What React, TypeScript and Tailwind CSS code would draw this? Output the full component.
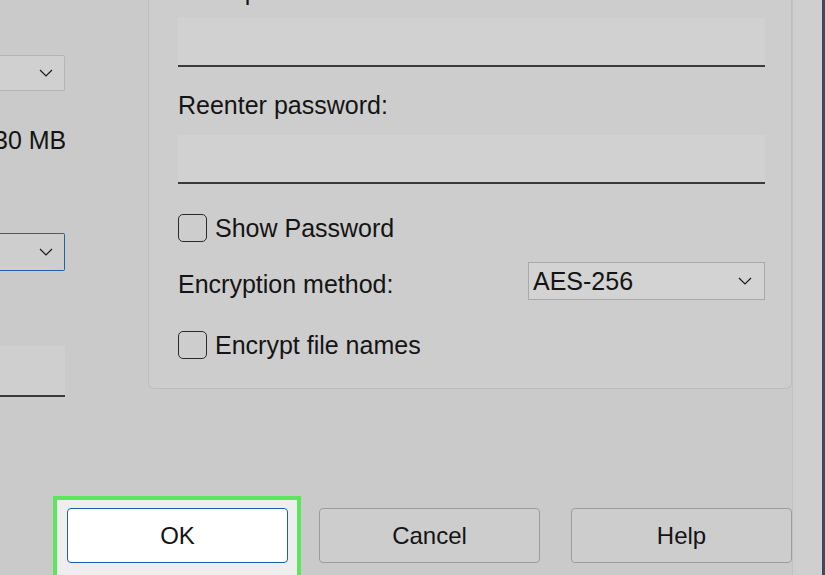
import React from "react";

function Chevron() {
  return (
    <svg width="14" height="8" viewBox="0 0 14 8" className="shrink-0">
      <polyline points="1,1 7,7 13,1" fill="none" stroke="#1a1a1a" strokeWidth="1.2" />
    </svg>
  );
}

function Checkbox({ label }: { label: string }) {
  return (
    <div className="flex h-[28px] items-center">
      <div className="h-[28px] w-[29px] rounded-[5px] border-[1.5px] border-[#2a2a2a]" />
      <span className="ml-[8px] whitespace-nowrap leading-[28px]">{label}</span>
    </div>
  );
}

function DialogButton({ label, primary }: { label: string; primary?: boolean }) {
  return (
    <button
      type="button"
      className={`flex h-[55px] w-[221px] shrink-0 items-center justify-center rounded-[4px] border text-[24px] ${
        primary ? "border-[#1d5fae] bg-white" : "border-[#9c9c9c] bg-[#cdcdcd]"
      }`}
    >
      {label}
    </button>
  );
}

export default function App() {
  return (
    <div className="relative flex h-[575px] w-[825px] overflow-hidden bg-[#cacaca] font-['Liberation_Sans',Arial,sans-serif] text-[25px] text-[#141414]">
      <div className="flex w-[792px] shrink-0 flex-col">
        {/* Top area */}
        <div className="flex h-[496px] shrink-0">
          {/* Left column, cut off by the frame */}
          <div className="flex w-[65px] shrink-0 flex-col overflow-hidden">
            <div className="mt-[55px] flex h-[36px] items-center justify-end rounded-r-[2px] border border-l-0 border-[#b5b5b5] bg-[#d0d0d0] pr-[11px]">
              <Chevron />
            </div>
            <div className="-ml-[6px] mt-[35px] h-[28px] whitespace-nowrap leading-[28px]">30 MB</div>
            <div className="mt-[79px] flex h-[38px] items-center justify-end rounded-r-[2px] border border-l-0 border-[#2a5ea8] bg-[#cecece] pr-[11px]">
              <Chevron />
            </div>
            <div className="mt-[75px] h-[51px] border-b-2 border-[#3a3a3a] bg-[#cfcfcf]" />
          </div>

          {/* Encryption group */}
          <div className="ml-[83px] flex h-[389px] w-[644px] shrink-0 flex-col rounded-b-[6px] border border-t-0 border-[#bdbdbd] bg-[#cdcdcd] pl-[29px]">
            <div className="-mt-[23px] h-[28px] whitespace-nowrap leading-[28px]">Enter password:</div>
            <div className="mt-[13px] h-[49px] w-[587px] border-b-2 border-[#3a3a3a] bg-[#d1d1d1]" />
            <div className="mt-[24px] h-[28px] leading-[28px]">Reenter password:</div>
            <div className="mt-[16px] h-[49px] w-[587px] border-b-2 border-[#3a3a3a] bg-[#d1d1d1]" />
            <div className="mt-[30px]">
              <Checkbox label="Show Password" />
            </div>
            <div className="mt-[20px] flex h-[38px] w-[587px] items-center justify-between">
              <span className="mt-[6px] leading-[28px]">Encryption method:</span>
              <div className="flex h-[38px] w-[237px] items-center justify-between border border-[#a8a8a8] bg-[#d3d3d3] pl-[4px] pr-[12px]">
                <span className="leading-[28px]">AES-256</span>
                <Chevron />
              </div>
            </div>
            <div className="mt-[31px]">
              <Checkbox label="Encrypt file names" />
            </div>
          </div>
        </div>

        {/* Buttons */}
        <div className="flex pl-[53px]">
          <div className="h-[90px] w-[248px] shrink-0 border-4 border-[#5be65b] bg-[#eeeeee] pl-[10px] pt-[8px]">
            <DialogButton label="OK" primary />
          </div>
          <div className="ml-[18px] mt-[12px]">
            <DialogButton label="Cancel" />
          </div>
          <div className="ml-[31px] mt-[12px]">
            <DialogButton label="Help" />
          </div>
        </div>
      </div>
      <div className="w-[30px] shrink-0 border-l border-[#c2c2c2] bg-[#cfcfcf]" />
      <div className="w-[3px] shrink-0 bg-[#3f4b56]" />
    </div>
  );
}
